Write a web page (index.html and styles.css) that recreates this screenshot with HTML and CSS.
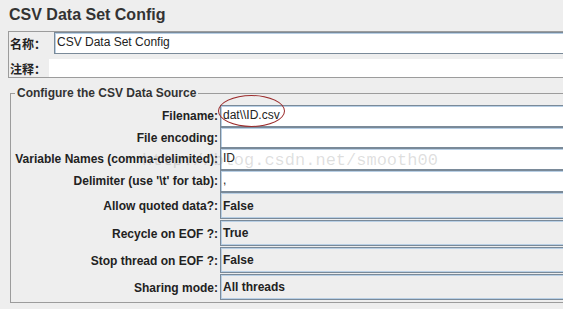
FILE: index.html
```html
<!doctype html>
<html lang="zh">
  <head>
    <meta charset="UTF-8" />
    <title>CSV Data Set Config</title>
    <link rel="stylesheet" href="styles.css">
  </head>
  <body>
    <div class="page">
      <h1 class="title">CSV Data Set Config</h1>

      <div class="name-panel">
        <div class="name-row">
          <span class="name-label">名称：</span>
          <div class="text-field">CSV Data Set Config</div>
        </div>
        <div class="comment-row">
          <span class="name-label">注释：</span>
          <div class="comment-field"></div>
        </div>
      </div>

      <fieldset class="source">
        <legend>Configure the CSV Data Source</legend>
        <div class="form-grid">
          <label>Filename:</label>
          <div class="text-field">dat\\ID.csv</div>
          <label>File encoding:</label>
          <div class="text-field"></div>
          <label>Variable Names (comma-delimited):</label>
          <div class="text-field">ID</div>
          <label>Delimiter (use '\t' for tab):</label>
          <div class="text-field">,</div>
          <label>Allow quoted data?:</label>
          <div class="combo">False</div>
          <label>Recycle on EOF ?:</label>
          <div class="combo">True</div>
          <label>Stop thread on EOF ?:</label>
          <div class="combo">False</div>
          <label>Sharing mode:</label>
          <div class="combo">All threads</div>
        </div>
      </fieldset>

      <!-- annotations drawn over the screenshot -->
      <div class="highlight"></div>
      <div class="watermark">http://blog.csdn.net/smooth00</div>
    </div>
  </body>
</html>
```
FILE: styles.css
```css
* {
  box-sizing: border-box;
}

body {
  margin: 0;
  background: #eeeeee;
  color: #222;
  font-family: "Liberation Sans", Arial, "Noto Sans CJK SC", sans-serif;
  font-size: 12px;
  overflow: hidden;
}

.page {
  position: relative;
  width: 720px;
  height: 309px;
}

.title {
  margin: 0;
  height: 31px;
  padding: 6px 0 0 9px;
  font-size: 16px;
  line-height: 18px;
  font-weight: bold;
  color: #333;
}

.name-panel {
  margin-left: 8px;
  border: 1px solid #9c9c9c;
  border-right: none;
  padding-left: 1px;
}

.name-row,
.comment-row {
  display: flex;
  align-items: center;
}

.name-row {
  height: 22px;
}

.comment-row {
  height: 18px;
  margin-top: 5px;
}

.name-label {
  width: 44px;
  font-weight: bold;
}

.comment-row .name-label {
  width: 39px;
}

.comment-field {
  flex: 1;
  height: 18px;
  background: #fff;
}

.text-field {
  flex: 1;
  height: 100%;
  background: #fff;
  border: 1px solid #7a8a99;
  box-shadow: inset 1px 1px 0 #b8cfe5;
  padding-left: 2px;
  line-height: 19px;
  white-space: nowrap;
}

.source {
  margin: 8px 0 0 10px;
  padding: 5px 0 1px 0;
  border: 1px solid #9c9c9c;
  border-right: none;
  min-width: 0;
}

.source legend {
  margin-left: 4px;
  padding: 0 2px;
  font-weight: bold;
  line-height: 14px;
  color: #333;
}

.form-grid {
  display: grid;
  grid-template-columns: 208px 1fr;
  grid-template-rows: 22px 21px 22px 22px 28px 27px 27px 27px;
  column-gap: 1px;
}

.form-grid label {
  align-self: center;
  text-align: right;
  font-weight: bold;
  padding-right: 1px;
  white-space: nowrap;
}

.combo {
  margin-bottom: 1px;
  background: #eeeeee;
  border: 1px solid #7a8a99;
  box-shadow: inset 1px 1px 0 #b8cfe5, inset -1px -1px 0 #b8cfe5;
  padding-left: 2px;
  display: flex;
  align-items: center;
  font-weight: bold;
}

.highlight {
  position: absolute;
  left: 218px;
  top: 95px;
  width: 67px;
  height: 32px;
  border: 1px solid #9b2b2b;
  border-radius: 50%;
}

.watermark {
  position: absolute;
  left: 142px;
  top: 151px;
  font-family: "Liberation Mono", "DejaVu Sans Mono", monospace;
  font-size: 17px;
  color: rgba(140, 140, 140, 0.28);
  white-space: nowrap;
}
```
